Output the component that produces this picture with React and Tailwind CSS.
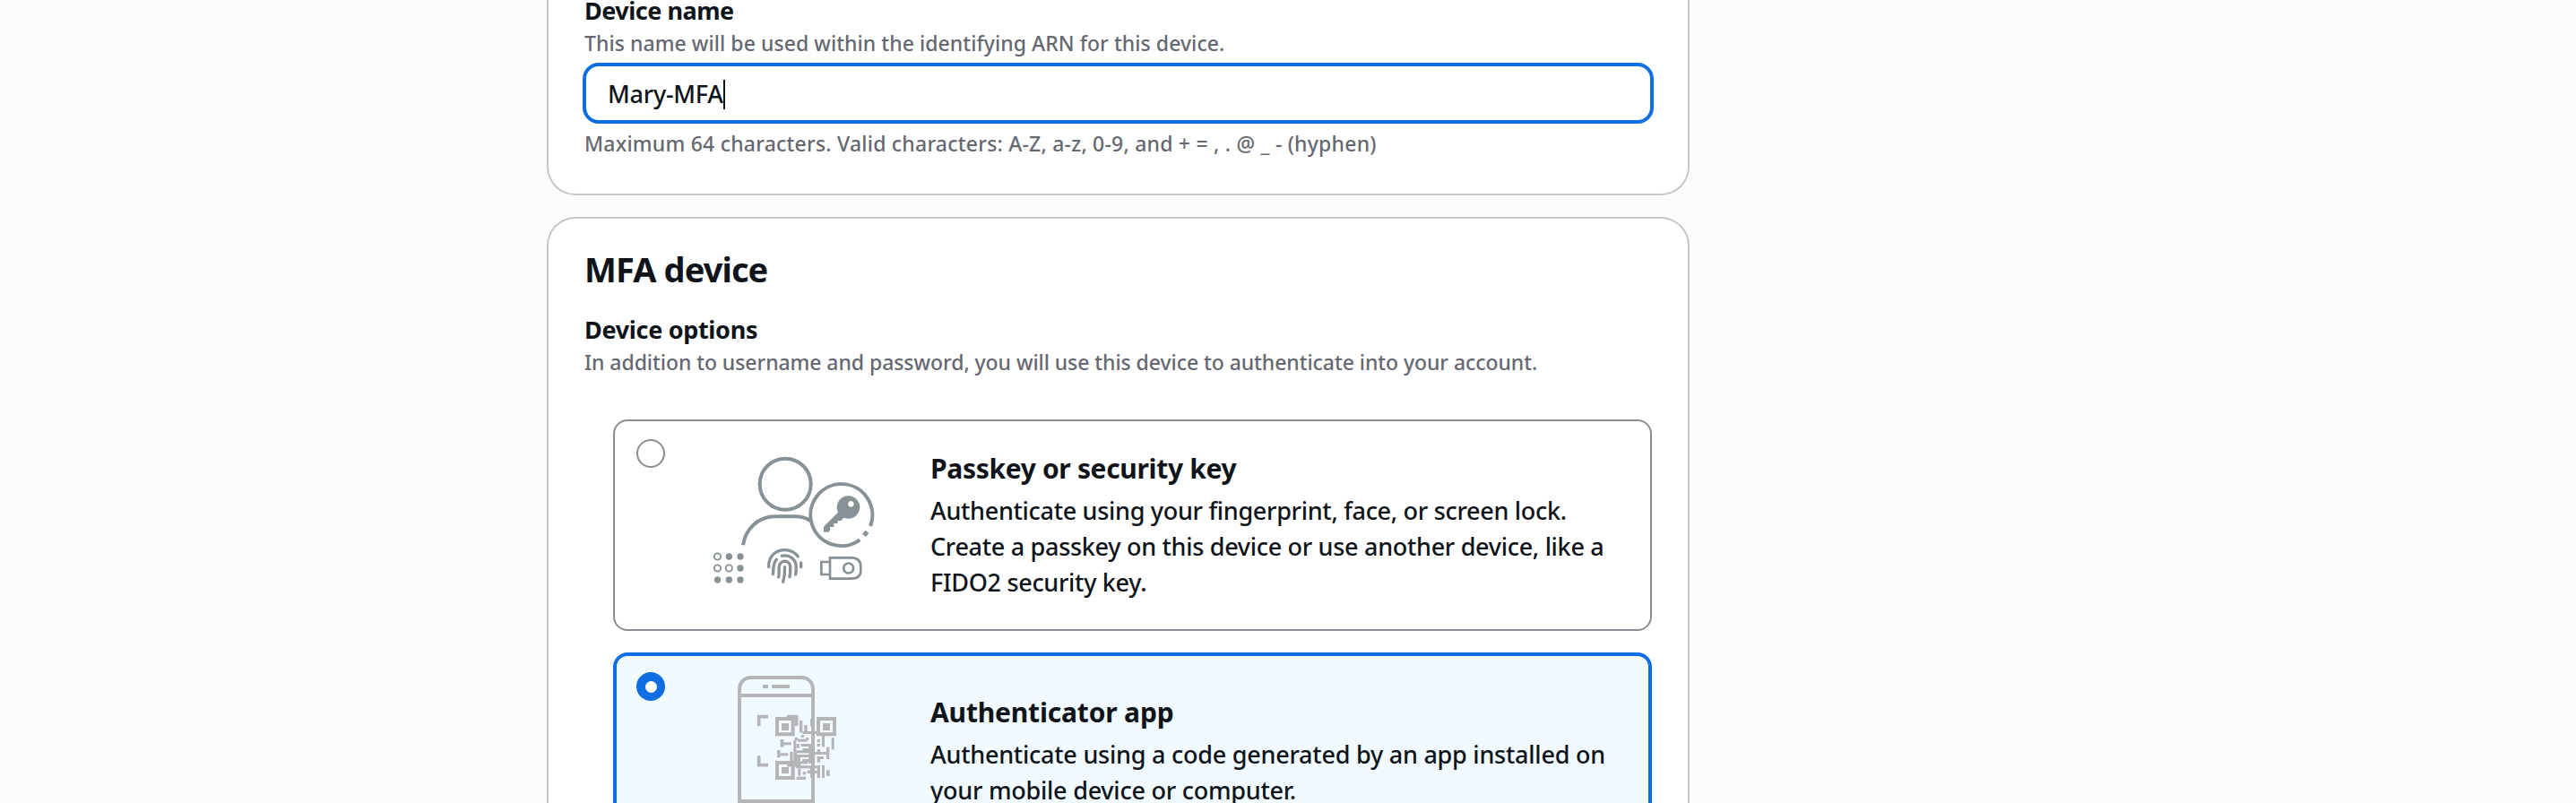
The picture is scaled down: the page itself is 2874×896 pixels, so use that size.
function PasskeyArt() {
  return (
    <svg className="h-[160px] w-[210px] shrink-0" viewBox="0 0 630 480" fill="none" stroke="#879196" strokeWidth="12">
      <circle cx="288.5" cy="120.5" r="85.5" />
      <path d="M147 325C155 270 198 229 255 229H322Q350 229 372 243" />
      <path d="M573 261A103.5 103.5 0 1 0 538 307" />
      <path d="M552.5 292.5L562 280" strokeWidth="15" />
      <g fill="#879196" stroke="none">
        <path
          fillRule="evenodd"
          d="M500 160a38 38 0 1 1-15 73L478 238V243H464V252H451V264H438V275L433 281H417V263L465 215A38 38 0 0 1 500 160ZM508 177a10 10 0 1 0 .1 0Z"
        />
        <circle cx="100" cy="363" r="11" />
        <circle cx="138" cy="363" r="11" />
        <circle cx="138" cy="402" r="11" />
        <circle cx="61.5" cy="441" r="11" />
        <circle cx="100" cy="441" r="11" />
        <circle cx="138" cy="441" r="11" />
      </g>
      <g strokeWidth="5.5">
        <circle cx="61.5" cy="363" r="11" />
        <circle cx="61.5" cy="402" r="11" />
        <circle cx="100" cy="402" r="11" />
      </g>
      <g strokeWidth="10" strokeLinecap="round">
        <path d="M233 398C231 362 258 341 286 341C304 341 320 348 331 363" />
        <path d="M341 384V398" />
        <path d="M277 361C304 355 325 374 325 398Q325 412 323 423" />
        <path d="M259 373C246 386 250 402 247 422" />
        <path d="M266 432C269 418 266 406 268 396C271 373 303 373 305 396Q306 414 303 431" />
        <path d="M286.5 398Q288 424 281 448" />
      </g>
      <g strokeWidth="8">
        <path d="M438 367H509Q541 367 541 397V408Q541 437 511 437H438Z" />
        <path d="M438 381H409V423H438" />
        <circle cx="500" cy="402" r="16.5" />
      </g>
    </svg>
  );
}

const MODULES = [
  [186, 42, 10, 40], [202, 57, 10, 30], [196, 78, 50, 9], [222, 36, 5, 25], [191, 90, 10, 9],
  [170, 99, 10, 9], [180, 104, 32, 9], [207, 99, 10, 9], [122, 105, 11, 26], [132, 115, 26, 9],
  [111, 141, 11, 25], [121, 151, 27, 9], [166, 108, 9, 40], [176, 120, 10, 14], [191, 120, 33, 9],
  [175, 142, 45, 9], [196, 135, 28, 9], [154, 147, 10, 34], [166, 148, 11, 32], [175, 156, 50, 9],
  [181, 165, 8, 12], [196, 171, 28, 9], [217, 120, 10, 66], [154, 178, 60, 9], [150, 185, 40, 10],
  [175, 193, 70, 9], [181, 203, 9, 24], [176, 230, 31, 10], [197, 213, 10, 10], [212, 209, 33, 10],
  [222, 198, 6, 36], [245, 105, 10, 9], [245, 120, 10, 9], [261, 93, 9, 37], [293, 99, 9, 40],
  [276, 131, 10, 40], [237, 147, 42, 9], [245, 138, 10, 12], [245, 162, 22, 9], [245, 171, 10, 11],
  [245, 192, 10, 42], [261, 192, 9, 42], [276, 208, 11, 20],
];

function PhoneArt() {
  return (
    <svg className="h-[148px] w-[210px] shrink-0" viewBox="330 99 630 444" fill="none" stroke="#b4b4bb" strokeWidth="12">
      <path d="M465 560V161A38 38 0 0 1 503 123H673A38 38 0 0 1 711 161V560M465 183H711M465 537H711" />
      <path d="M543 153H561M573 153H633" />
      <path d="M561 254H530V285M624 254H656V285M530 385V416H561M624 416H656V385" strokeWidth="11" />
      <path d="M591 261H644V313H591ZM729 261H783V313H729ZM591 408H644V459H591Z" />
      <g fill="#b4b4bb" stroke="none">
        <path d="M606 276h24v24h-24ZM744 276h24v24h-24ZM606 423h24v21h-24Z" />
        {MODULES.map(([x, y, w, h], i) => (
          <rect key={i} x={x + 480} y={y + 225} width={w} height={h} />
        ))}
      </g>
    </svg>
  );
}

export default function App() {
  return (
    <main className="h-[896px] overflow-hidden bg-[#fcfcfc] pl-[610px] font-['Noto_Sans','Open_Sans',sans-serif] font-medium whitespace-nowrap text-[#0f141a]">
      <div className="flex w-[1275px] flex-col gap-6">
        <section className="h-[218px] rounded-b-[32px] border-2 border-t-0 border-[#c6c6cd] bg-white px-[40px]">
          <label className="block text-[27px] leading-[24px] font-bold tracking-[-0.49px]">Device name</label>
          <p className="mt-1 text-[23px] leading-[40px] tracking-[0.06px] text-[#656871]">
            This name will be used within the identifying ARN for this device.
          </p>
          <div className="-mx-[2px] mt-[2px] flex h-[68px] items-center rounded-[18px] border-4 border-[#0f6ee2] bg-white pt-[2px] pl-6">
            <span className="text-[27px] leading-[36px] tracking-[-0.25px]">Mary-MFA</span>
            <span className="h-[33px] w-[2px] bg-[#0f141a]" />
          </div>
          <p className="mt-[2px] text-[23px] leading-[40px] tracking-[0.22px] text-[#656871]">
            Maximum 64 characters. Valid characters: A-Z, a-z, 0-9, and + = , . @ _ - (hyphen)
          </p>
        </section>

        <section className="h-[720px] rounded-t-[32px] border-2 border-b-0 border-[#c6c6cd] bg-white px-[40px] pt-8">
          <h2 className="text-[38px] leading-[48px] font-bold tracking-[-0.9px]">MFA device</h2>
          <h3 className="mt-7 text-[27px] leading-[32px] font-bold tracking-[-0.32px]">Device options</h3>
          <p className="text-[23px] leading-[40px] tracking-[-0.06px] text-[#656871]">
            In addition to username and password, you will use this device to authenticate into your account.
          </p>

          <div className="mt-11 ml-8 flex flex-col gap-6">
            <div className="flex h-[236px] items-start rounded-[16px] border-2 border-[#8c8c94] pt-5 pl-6">
              <span className="size-8 shrink-0 rounded-full border-2 border-[#8c8c94] bg-white" />
              <div className="mt-[10px] ml-[38px] flex w-[258px]">
                <PasskeyArt />
              </div>
              <div className="mt-[13px] text-[27px] leading-[40px]">
                <h4 className="mb-[7px] text-[30px] font-bold tracking-[-0.33px]">Passkey or security key</h4>
                <p className="tracking-[-0.3px]">
                  Authenticate using your fingerprint, face, or screen lock.
                  <br />
                  Create a passkey on this device or use another device, like a
                  <br />
                  FIDO2 security key.
                </p>
              </div>
            </div>

            <div className="flex h-[236px] items-start rounded-[16px] border-4 border-[#0f6ee2] bg-[#f0faff] pt-[18px] pl-[22px]">
              <span className="flex size-8 shrink-0 items-center justify-center rounded-full bg-[#0f6ee2]">
                <span className="size-[13px] rounded-full bg-white" />
              </span>
              <div className="-mt-[2px] ml-[38px] flex w-[258px]">
                <PhoneArt />
              </div>
              <div className="mt-[25px] text-[27px] leading-[40px]">
                <h4 className="mb-[7px] text-[30px] font-bold tracking-[-0.18px]">Authenticator app</h4>
                <p className="tracking-[-0.24px]">
                  Authenticate using a code generated by an app installed on
                  <br />
                  your mobile device or computer.
                </p>
              </div>
            </div>
          </div>
        </section>
      </div>
    </main>
  );
}
